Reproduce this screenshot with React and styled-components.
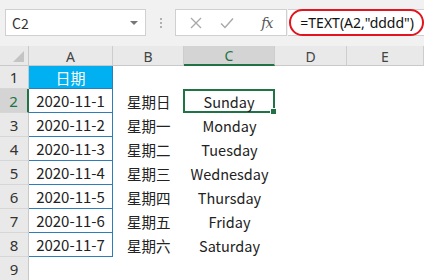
import React from 'react';
import styled, { createGlobalStyle, css } from 'styled-components';

const GlobalStyle = createGlobalStyle`
  html, body {
    margin: 0;
    padding: 0;
    background: #ffffff;
  }
  body {
    font-family: "Noto Sans CJK SC", "Noto Sans", sans-serif;
    color: #222;
  }
`;

const Sheet = styled.div`
  width: 424px;
  height: 280px;
  overflow: hidden;
  background: #fff;
`;

const Toolbar = styled.div`
  height: 46px;
  display: flex;
  align-items: flex-start;
  padding: 9px 0 0 5px;
  box-sizing: border-box;
  background: #f1f1f1;
`;

const NameBox = styled.div`
  width: 142px;
  height: 27px;
  box-sizing: border-box;
  border: 1px solid #d0d0d0;
  background: #fff;
  display: flex;
  align-items: center;
  justify-content: space-between;
  padding: 0 7px 0 6px;
  font-size: 14px;
  color: #333;
`;

const Caret = styled.span`
  width: 0;
  height: 0;
  border-left: 4px solid transparent;
  border-right: 4px solid transparent;
  border-top: 4px solid #777;
`;

const Dots = styled.div`
  width: 30px;
  height: 27px;
  display: flex;
  flex-direction: column;
  align-items: center;
  justify-content: center;
  gap: 2px;

  span {
    width: 2px;
    height: 2px;
    background: #b0b0b0;
  }
`;

const ActionBox = styled.div`
  width: 113px;
  height: 27px;
  box-sizing: border-box;
  border: 1px solid #d0d0d0;
  background: #fff;
  display: flex;
  align-items: center;
  padding-left: 13px;
`;

const Action = styled.span`
  width: ${(p) => p.$w}px;
  display: flex;
  justify-content: center;
  color: #9a9a9a;
`;

const Fx = styled.span`
  margin-left: 10px;
  font-family: "DejaVu Serif", "Liberation Serif", serif;
  font-style: italic;
  font-size: 14px;
  color: #555;
  letter-spacing: -1px;
`;

const FormulaBox = styled.div`
  flex: 1;
  height: 27px;
  box-sizing: border-box;
  border-top: 1px solid #d0d0d0;
  border-bottom: 1px solid #d0d0d0;
  background: #fff;
  display: flex;
  align-items: center;
  margin-left: 1px;
`;

const Highlight = styled.span`
  height: 27px;
  box-sizing: border-box;
  border: 2px solid #e3141d;
  border-radius: 14px;
  display: flex;
  align-items: center;
  padding: 0 8px 0 9px;
  margin-left: 1px;
  font-family: "Noto Sans", sans-serif;
  font-size: 14px;
  color: #111;
`;

const Grid = styled.div`
  display: grid;
  grid-template-columns: 29px 84px 71px 91px 72px 1fr;
  grid-template-rows: 20px 23px repeat(8, 24px);
`;

const Corner = styled.div`
  background: #e9e9e9;
  border-right: 1px solid #c9c9c9;
  border-bottom: 1px solid #c9c9c9;
  box-sizing: border-box;
  position: relative;

  &::after {
    content: '';
    position: absolute;
    right: 4px;
    bottom: 3px;
    width: 0;
    height: 0;
    border-left: 11px solid transparent;
    border-bottom: 11px solid #c4c4c4;
  }
`;

const ColHead = styled.div`
  box-sizing: border-box;
  background: ${(p) => (p.$active ? '#d4d4d4' : '#e9e9e9')};
  color: ${(p) => (p.$active ? '#217346' : '#444')};
  border-right: 1px solid #cdcdcd;
  border-bottom: ${(p) => (p.$active ? '2px solid #217346' : '1px solid #c9c9c9')};
  display: flex;
  align-items: center;
  justify-content: center;
  font-family: "Noto Sans", sans-serif;
  font-size: 14px;
  padding-top: 1px;
`;

const RowHead = styled.div`
  box-sizing: border-box;
  background: ${(p) => (p.$active ? '#d4d4d4' : '#e9e9e9')};
  color: ${(p) => (p.$active ? '#217346' : '#333')};
  border-right: ${(p) => (p.$active ? '2px solid #217346' : '1px solid #c9c9c9')};
  border-bottom: 1px solid #d6d6d6;
  display: flex;
  align-items: flex-end;
  justify-content: center;
  padding-bottom: 1px;
  font-family: "Noto Sans", sans-serif;
  font-size: 15px;
`;

const Cell = styled.div`
  box-sizing: border-box;
  display: flex;
  align-items: center;
  justify-content: ${(p) => p.$align || 'flex-start'};
  padding-left: ${(p) => p.$pad || 0}px;
  font-size: 14.5px;
  color: #222;
  white-space: nowrap;
  position: relative;
`;

const DateCell = styled(Cell)`
  justify-content: center;
  border-right: 1px solid #2f7db8;
  border-bottom: 1px solid #2f7db8;
  font-size: 15px;
  ${(p) =>
    p.$title &&
    css`
      background: #00b0f0;
      color: #fff;
    `}
`;

const Selected = styled(Cell)`
  border: 2px solid #217346;
  margin-left: -1px;

  &::after {
    content: '';
    position: absolute;
    right: -4px;
    bottom: -4px;
    width: 5px;
    height: 5px;
    background: #217346;
    border: 1px solid #fff;
  }
`;

const cols = ['A', 'B', 'C', 'D', 'E'];
const days = [
  ['星期日', 'Sunday'],
  ['星期一', 'Monday'],
  ['星期二', 'Tuesday'],
  ['星期三', 'Wednesday'],
  ['星期四', 'Thursday'],
  ['星期五', 'Friday'],
  ['星期六', 'Saturday'],
];

export default function App() {
  return (
    <>
      <GlobalStyle />
      <Sheet>
        <Toolbar>
          <NameBox>
            C2
            <Caret />
          </NameBox>
          <Dots>
            <span />
            <span />
            <span />
          </Dots>
          <ActionBox>
            <Action $w={14}>
              <svg width="12" height="12" viewBox="0 0 12 12">
                <path d="M1 1 L11 11 M11 1 L1 11" stroke="#a8a8a8" strokeWidth="1.3" fill="none" />
              </svg>
            </Action>
            <Action $w={48}>
              <svg width="14" height="12" viewBox="0 0 14 12">
                <path d="M1 6.5 L5 10.5 L13 1.5" stroke="#a8a8a8" strokeWidth="1.4" fill="none" />
              </svg>
            </Action>
            <Fx>fx</Fx>
          </ActionBox>
          <FormulaBox>
            <Highlight>=TEXT(A2,"dddd")</Highlight>
          </FormulaBox>
        </Toolbar>
        <Grid>
          <Corner />
          {cols.map((c) => (
            <ColHead key={c} $active={c === 'C'}>
              {c}
            </ColHead>
          ))}
          <RowHead>1</RowHead>
          <DateCell $title>日期</DateCell>
          <Cell />
          <Cell />
          <Cell />
          <Cell />
          {days.map(([cn, en], i) => (
            <React.Fragment key={en}>
              <RowHead $active={i === 0}>{i + 2}</RowHead>
              <DateCell>2020-11-{i + 1}</DateCell>
              <Cell $pad={14}>{cn}</Cell>
              {i === 0 ? (
                <Selected $align="center">{en}</Selected>
              ) : (
                <Cell $align="center">{en}</Cell>
              )}
              <Cell />
              <Cell />
            </React.Fragment>
          ))}
          <RowHead>9</RowHead>
          <Cell />
          <Cell />
          <Cell />
          <Cell />
          <Cell />
        </Grid>
      </Sheet>
    </>
  );
}
